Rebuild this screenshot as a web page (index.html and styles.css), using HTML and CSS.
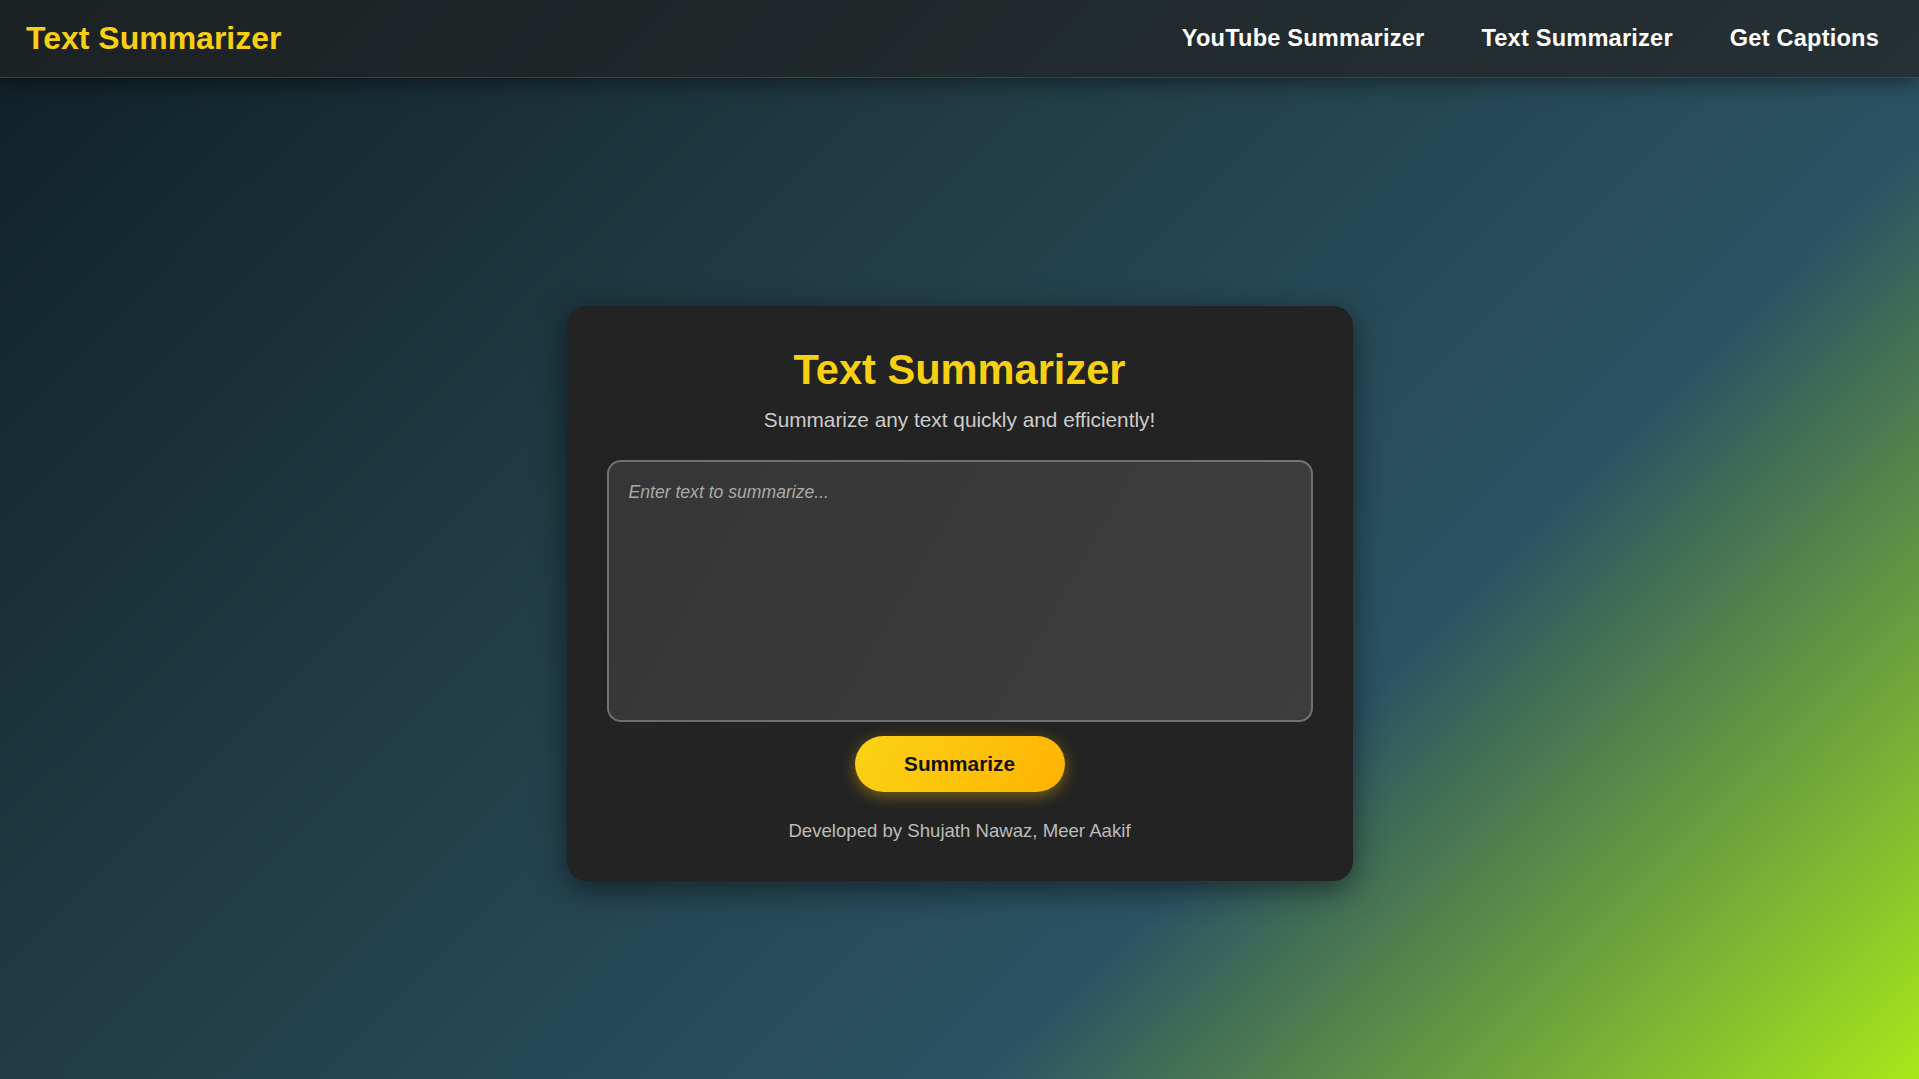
FILE: index.html
```html
<!DOCTYPE html>
<html lang="en">
<head>
<meta charset="UTF-8">
<title>Text Summarizer</title>
<link rel="stylesheet" href="styles.css">
</head>
<body>
  <nav class="navbar">
    <div class="logo">Text Summarizer</div>
    <ul class="nav-links">
      <li><a href="#">YouTube Summarizer</a></li>
      <li><a href="#">Text Summarizer</a></li>
      <li><a href="#">Get Captions</a></li>
    </ul>
  </nav>
  <main class="main">
    <section class="card">
      <h1 class="title">Text Summarizer</h1>
      <p class="subtitle">Summarize any text quickly and efficiently!</p>
      <textarea class="input" placeholder="Enter text to summarize..."></textarea>
      <button class="btn">Summarize</button>
      <p class="footer">Developed by Shujath Nawaz, Meer Aakif</p>
    </section>
  </main>
</body>
</html>
```

FILE: styles.css
```css
* { box-sizing: border-box; }

html, body {
  margin: 0;
  padding: 0;
}

body {
  min-height: 100vh;
  font-family: "Liberation Sans", Arial, sans-serif;
  background: linear-gradient(135deg, #0f2027 0%, #203a43 34%, #2c5364 69%, #a8e818 100%);
  display: flex;
  flex-direction: column;
  overflow: hidden;
}

.navbar {
  height: 78px;
  display: flex;
  align-items: center;
  justify-content: space-between;
  padding: 0 40px 0 26px;
  background: rgba(34, 34, 34, 0.7);
  border-bottom: 1px solid rgba(255, 255, 255, 0.12);
  box-shadow: 0 4px 20px rgba(0, 0, 0, 0.45);
  position: relative;
  z-index: 2;
}

.logo {
  color: #f7d011;
  font-size: 32px;
  font-weight: bold;
}

.nav-links {
  list-style: none;
  margin: 0;
  padding: 0;
  display: flex;
  gap: 57px;
}

.nav-links a {
  color: #ffffff;
  text-decoration: none;
  font-weight: bold;
  font-size: 23.6px;
  letter-spacing: 0.2px;
}

.main {
  flex: 1;
  display: flex;
  align-items: center;
  justify-content: center;
  padding-top: 30px;
}

.card {
  width: 786px;
  padding: 40px;
  background: #232323;
  border-radius: 20px;
  box-shadow: 0 8px 30px rgba(0, 0, 0, 0.5);
  display: flex;
  flex-direction: column;
  align-items: center;
}

.title {
  margin: 0;
  color: #f7d011;
  font-size: 41.6px;
  font-weight: bold;
  line-height: 48px;
}

.subtitle {
  margin: 14px 0 0;
  color: #cccccc;
  font-size: 20.8px;
  line-height: 24px;
}

.input {
  margin-top: 28px;
  width: 100%;
  height: 262px;
  padding: 20px;
  background: linear-gradient(120deg, rgba(255,255,255,0.09), rgba(255,255,255,0.12));
  border: 2px solid rgba(255, 255, 255, 0.28);
  border-radius: 14px;
  color: #eeeeee;
  font-family: "Liberation Sans", Arial, sans-serif;
  font-size: 17.6px;
  line-height: 20px;
  resize: none;
  outline: none;
}

.input::placeholder {
  color: #aaaaaa;
  font-style: italic;
}

.btn {
  margin-top: 14px;
  width: 210px;
  height: 56px;
  border: none;
  border-radius: 28px;
  background: linear-gradient(120deg, #fad315, #ffb300);
  color: #111111;
  font-family: "Liberation Sans", Arial, sans-serif;
  font-size: 20.8px;
  font-weight: bold;
  box-shadow: 0 4px 15px rgba(255, 193, 7, 0.4);
  cursor: pointer;
}

.footer {
  margin: 28px 0 0;
  color: #bbbbbb;
  font-size: 18.6px;
  line-height: 21px;
}
```
